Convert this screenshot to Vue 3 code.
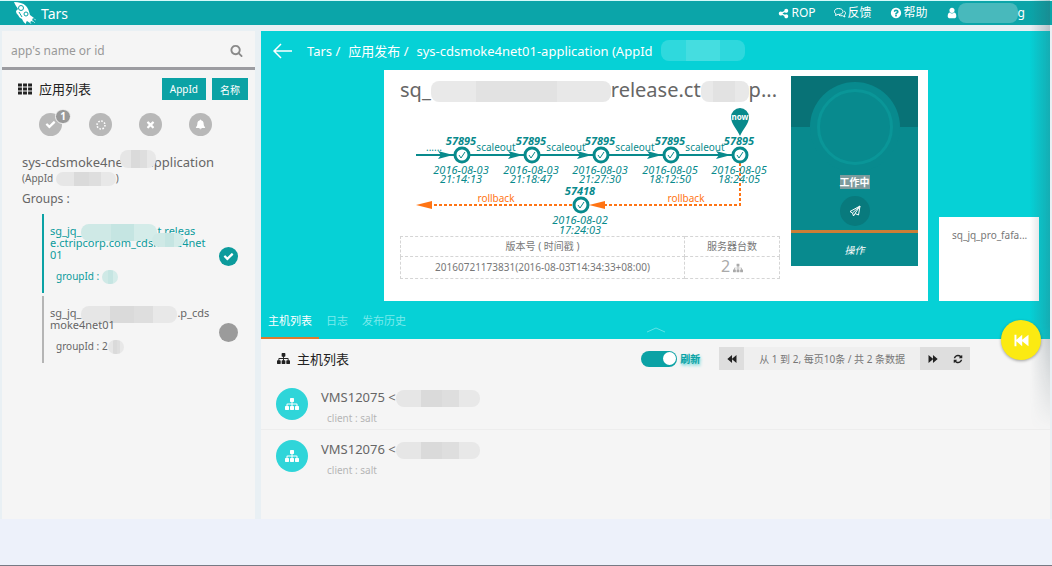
<script setup>
import { h, ref } from 'vue'

const paths = {
  check: 'M1671 566q0 40-28 68l-724 724-136 136q-28 28-68 28t-68-28l-136-136-362-362q-28-28-28-68t28-68l136-136q28-28 68-28t68 28l294 295 656-657q28-28 68-28t68 28l136 136q28 28 28 68z',
  times: 'M1490 1322q0 40-28 68l-136 136q-28 28-68 28t-68-28l-294-294-294 294q-28 28-68 28t-68-28l-136-136q-28-28-28-68t28-68l294-294-294-294q-28-28-28-68t28-68l136-136q28-28 68-28t68 28l294 294 294-294q28-28 68-28t68 28l136 136q28 28 28 68t-28 68l-294 294 294 294q28 28 28 68z',
  search: 'M1216 832q0-185-131.5-316.5t-316.5-131.5-316.5 131.5-131.5 316.5 131.5 316.5 316.5 131.5 316.5-131.5 131.5-316.5zm512 832q0 52-38 90t-90 38q-54 0-90-38l-343-342q-179 124-399 124-143 0-273.5-55.5t-225-150-150-225-55.5-273.5 55.5-273.5 150-225 225-150 273.5-55.5 273.5 55.5 225 150 150 225 55.5 273.5q0 220-124 399l343 343q37 37 37 90z',
  grid: 'M0 200h500v380H0zM646 200h500v380H646zM1292 200h500v380h-500zM0 706h500v380H0zM646 706h500v380H646zM1292 706h500v380h-500zM0 1212h500v380H0zM646 1212h500v380H646zM1292 1212h500v380h-500z',
  sitemap: 'M1792 1248v320q0 40-28 68t-68 28h-320q-40 0-68-28t-28-68v-320q0-40 28-68t68-28h96v-192h-512v192h96q40 0 68 28t28 68v320q0 40-28 68t-68 28h-320q-40 0-68-28t-28-68v-320q0-40 28-68t68-28h96v-192h-512v192h96q40 0 68 28t28 68v320q0 40-28 68t-68 28h-320q-40 0-68-28t-28-68v-320q0-40 28-68t68-28h96v-192q0-52 38-90t90-38h512v-192h-96q-40 0-68-28t-28-68v-320q0-40 28-68t68-28h320q40 0 68 28t28 68v320q0 40-28 68t-68 28h-96v192h512q52 0 90 38t38 90v192h96q40 0 68 28t28 68z',
  refresh: 'M1639 1056q0 5-1 7-64 268-268 434.5t-478 166.5q-146 0-282.5-55t-243.5-157l-129 129q-19 19-45 19t-45-19-19-45v-448q0-26 19-45t45-19h448q26 0 45 19t19 45-19 45l-137 137q71 66 161 102t187 36q134 0 250-65t186-179q11-17 53-117 8-23 30-23h192q13 0 22.5 9.5t9.5 22.5zm25-800v448q0 26-19 45t-45 19h-448q-26 0-45-19t-19-45 19-45l138-138q-148-137-349-137-134 0-250 65t-186 179q-11 17-53 117-8 23-30 23h-199q-13 0-22.5-9.5t-9.5-22.5v-7q65-268 270-434.5t480-166.5q146 0 284 55.5t245 156.5l130-129q19-19 45-19t45 19 19 45z',
  user: 'M1536 1399q0 109-62.5 187t-150.5 78h-854q-88 0-150.5-78t-62.5-187q0-85 8.5-160.5t31.5-152 58.5-131 94-89 134.5-34.5q131 128 313 128t313-128q76 0 134.5 34.5t94 89 58.5 131 31.5 152 8.5 160.5zm-256-887q0 159-112.5 271.5t-271.5 112.5-271.5-112.5-112.5-271.5 112.5-271.5 271.5-112.5 271.5 112.5 112.5 271.5z',
  question: 'M1024 1376v-192q0-14-9-23t-23-9h-192q-14 0-23 9t-9 23v192q0 14 9 23t23 9h192q14 0 23-9t9-23zm256-672q0-88-55.5-163t-138.5-116-170-41q-243 0-371 213-15 24 8 42l132 100q7 6 19 6 16 0 25-12 53-68 86-92 34-24 86-24 48 0 85.5 26t37.5 59q0 38-20 61t-68 45q-63 28-115.5 86.5t-52.5 125.5v36q0 14 9 23t23 9h192q14 0 23-9t9-23q0-19 21.5-49.5t54.5-49.5q32-18 49-28.5t46-35 44.5-48 28-60.5 12.5-81zm384 192q0 209-103 385.5t-279.5 279.5-385.5 103-385.5-103-279.5-279.5-103-385.5 103-385.5 279.5-279.5 385.5-103 385.5 103 279.5 279.5 103 385.5z',
  share: 'M1344 1024q133 0 226.500 93.500t93.500 226.500-93.500 226.500-226.500 93.500-226.500-93.500-93.500-226.500q0-12 2-34l-360-180q-92 86-218 86-133 0-226.500-93.500t-93.500-226.500 93.500-226.500 226.500-93.500q126 0 218 86l360-180q-2-22-2-34 0-133 93.500-226.500t226.500-93.500 226.500 93.500 93.500 226.500-93.500 226.500-226.500 93.500q-126 0-218-86l-360 180q2 22 2 34t-2 34l360 180q92-86 218-86z',
  bell: 'M896 100q90 0 100 110c240 50 400 240 410 500 10 360 80 480 250 640q0 100-110 100H246q-110 0-110-100c170-160 240-280 250-640 10-260 170-450 410-500q10-110 100-110zM690 1520h412q-30 170-206 170t-206-170z',
  backward: 'M1700 200v1392L900 946v646L60 896 900 200v646z',
  forward: 'M92 200v1392L892 946v646l840-696L892 200v646z',
  fastback: 'M60 200h230v620L980 200v620L1732 200v1392L980 972v620L290 972v620H60z'
}
const Icon = (p) => h('svg', { viewBox: '0 0 1792 1792', width: p.size, height: p.size, 'aria-hidden': 'true', fill: 'currentColor' }, [h('path', { d: paths[p.name] })])
Icon.props = ['name', 'size']

const query = ref('')
const autoRefresh = ref(true)
const nodes = [
  { x: 62, date: '2016-08-03', time: '21:14:13' },
  { x: 132, date: '2016-08-03', time: '21:18:47' },
  { x: 201, date: '2016-08-03', time: '21:27:30' },
  { x: 271, date: '2016-08-05', time: '18:12:50' },
  { x: 340, date: '2016-08-05', time: '18:24:05' }
]
const hosts = ['VMS12075', 'VMS12076']
const tabs = ['主机列表', '日志', '发布历史']
</script>

<template>
  <div class="page">
    <header class="top">
      <a class="brand" href="#">
        <svg class="rocket" viewBox="0 0 24 24" width="24" height="24" aria-hidden="true">
          <path d="M1 1c5 0 9 1 12 4 2 2 3 5 4 9l4 3-2 1 2 3-3-1-1 2-3-2c-1 1-1 2-1 3-2-1-3-3-4-5-2-1-3-2-4-4-1-1-2-2-2-4l2-2C4 6 2 4 1 1z" fill="#fff" />
          <circle cx="8" cy="7" r="2.500" fill="none" stroke="#0ba5a9" stroke-width="1" />
          <circle cx="13" cy="13" r="2" fill="none" stroke="#0ba5a9" stroke-width="1" />
          <path d="M6 11l3 5" stroke="#0ba5a9" fill="none" />
          <path d="M19 19l3 3M17 21l1 2M21 18l2 1" stroke="#8ad9db" fill="none" />
        </svg>
        <span>Tars</span>
      </a>
      <nav class="links">
        <a href="#"><Icon name="share" size="11" />ROP</a>
        <a href="#">
          <svg viewBox="0 0 24 24" width="12" height="12" fill="none" stroke="currentColor" stroke-width="2" aria-hidden="true">
            <path d="M9 3c-5 0-8 2.500-8 6 0 2 1 3.500 3 4.500L3 17l5-2.200c6 .4 10-2.300 10-5.800S14 3 9 3z" /><path d="M20 8c2 1 3 2.500 3 4.500s-1 3-2.500 4L22 20l-5-2.500c-3 .3-5 0-7-1" />
          </svg>反馈</a>
        <a href="#"><Icon name="question" size="12" />帮助</a>
        <a class="account" href="#"><Icon name="user" size="12" /><i class="smudge w60 teal"></i>g</a>
      </nav>
    </header>

    <div class="body">
      <aside class="side">
        <div class="search">
          <input v-model="query" type="text" placeholder="app's name or id" aria-label="app's name or id">
          <button type="button" aria-label="search"><Icon name="search" size="13" /></button>
        </div>
        <div class="side-head">
          <h2><Icon name="grid" size="14" />应用列表</h2>
          <button type="button">AppId</button>
          <button type="button">名称</button>
        </div>
        <div class="filters">
          <button type="button" aria-label="success"><Icon name="check" size="11" /><b>1</b></button>
          <button type="button" aria-label="running">
            <svg viewBox="0 0 12 12" width="12" height="12" aria-hidden="true"><circle cx="6" cy="6" r="4" fill="none" stroke="#fff" stroke-width="1.500" stroke-dasharray="1.600 1.500" /></svg>
          </button>
          <button type="button" aria-label="failed"><Icon name="times" size="11" /></button>
          <button type="button" aria-label="alerts"><Icon name="bell" size="11" /></button>
        </div>
        <div class="app">
          <p class="app-name">sys-cdsmoke4net01-application<i class="smudge over w36 name-mask"></i></p>
          <p class="app-id">(AppId <i class="smudge w60"></i>)</p>
          <p class="groups-label">Groups :</p>
          <div class="group on">
            <div class="group-text">
              <p>sg_jq_<i class="smudge w76 tall mint"></i>t.releas<br>e.ctripcorp.com_cdsmoke4net<br>01<i class="smudge over w32 mint group-mask"></i></p>
              <p class="gid">groupId : <i class="smudge w16 mint"></i></p>
            </div>
            <button type="button" aria-label="selected group"><Icon name="check" size="11" /></button>
          </div>
          <div class="group">
            <div class="group-text">
              <p>sg_jq_<i class="smudge w96 tall"></i>.p_cds<br>moke4net01</p>
              <p class="gid">groupId : 2<i class="smudge w16"></i></p>
            </div>
            <button type="button" aria-label="select group"></button>
          </div>
        </div>
      </aside>

      <main class="main">
        <section class="hero">
          <nav class="crumbs">
            <a href="#" aria-label="back"><svg viewBox="0 0 20 16" width="20" height="16" fill="none" stroke="currentColor" stroke-width="1.500" aria-hidden="true"><path d="M8 1L1 8l7 7M1 8h18" /></svg></a>
            <a href="#">Tars /</a><a href="#">应用发布 /</a><span>sys-cdsmoke4net01-application (AppId</span><i class="smudge w84 aqua"></i>
          </nav>
          <div class="stage">
            <article class="card">
              <div class="info">
                <h1>sq_<i class="smudge w180 big"></i>release.ct<i class="smudge w48 big"></i>p...</h1>
                <svg class="timeline" viewBox="0 0 380 132" width="380" height="132" role="img" aria-label="release timeline">
                  <g stroke="#088a8c" stroke-width="2"><path d="M16 51H54M70 51H124M140 51H193M209 51H263M279 51H332" /></g>
                  <g stroke="#ff7414" stroke-width="2" stroke-dasharray="3 2" fill="none"><path d="M340 59V101H204" /><path d="M172 101H32" /></g>
                  <path d="M16 101l16-4v8zM189 101l16-4v8z" fill="#ff7414" />
                  <path d="M340 32C337 25 331 20 331 13a9 9 0 0 1 18 0C349 20 343 25 340 32z" fill="#088a8c" />
                  <text class="now" x="340" y="16">now</text>
                  <text class="op" x="34" y="47">......</text>
                  <template v-for="(n, i) in nodes" :key="n.x">
                    <path :d="`M${n.x - 9} 51l-15-4 3 4-3 4z`" fill="#088a8c" />
                    <circle :cx="n.x" cy="51" r="7" class="ring" />
                    <path :d="`M${n.x - 3} 51l2 3 4-6`" class="tick" />
                    <text class="ver" :x="n.x - 1" y="41">57895</text>
                    <text class="when" :x="n.x - 1" y="70">{{ n.date }}</text>
                    <text class="when" :x="n.x - 1" y="79">{{ n.time }}</text>
                    <text v-if="i < 4" class="op" :x="n.x + 34" y="47">scaleout</text>
                  </template>
                  <circle cx="181" cy="101" r="7" class="ring" />
                  <path d="M178 101l2 3 4-6" class="tick" />
                  <text class="ver" x="180" y="91">57418</text>
                  <text class="when" x="180" y="120">2016-08-02</text>
                  <text class="when" x="180" y="130">17:24:03</text>
                  <text class="op back" x="96" y="98">rollback</text>
                  <text class="op back" x="286" y="98">rollback</text>
                </svg>
                <table>
                  <thead><tr><th>版本号 ( 时间戳 )</th><th>服务器台数</th></tr></thead>
                  <tbody><tr><td>20160721173831(2016-08-03T14:34:33+08:00)</td><td class="count"><span>2</span> <Icon name="sitemap" size="10" /></td></tr></tbody>
                </table>
              </div>
              <div class="status">
                <div class="dial"><span></span></div>
                <p><mark>工作中</mark></p>
                <button class="send" type="button" aria-label="publish">
                  <svg viewBox="0 0 24 24" width="12" height="12" fill="none" stroke="#fff" stroke-width="2" stroke-linejoin="round" aria-hidden="true"><path d="M22 2L2 13l5 3L22 2l-3 18-7-3-3 5-2-6M22 2l-10 15" /></svg>
                </button>
                <button class="act" type="button">操作</button>
              </div>
            </article>
            <article class="next">sq_jq_pro_fafa...</article>
          </div>
          <div class="tabs">
            <button v-for="(t, i) in tabs" :key="t" type="button" :class="{ active: i === 0 }">{{ t }}</button>
            <svg class="fold" viewBox="0 0 20 6" width="20" height="6" fill="none" stroke="#5fe3e6" aria-hidden="true"><path d="M1 5l9-4 9 4" /></svg>
          </div>
          <button class="fab" type="button" aria-label="rollback"><Icon name="fastback" size="15" /></button>
        </section>

        <section class="hosts">
          <div class="hosts-head">
            <h2><Icon name="sitemap" size="13" />主机列表</h2>
            <label class="switch"><input v-model="autoRefresh" type="checkbox"><span>刷新</span></label>
            <div class="pager">
              <button type="button" aria-label="previous"><Icon name="backward" size="10" /></button>
              <span>从 1 到 2, 每页10条 / 共 2 条数据</span>
              <button type="button" aria-label="next"><Icon name="forward" size="10" /></button>
              <button type="button" aria-label="reload"><Icon name="refresh" size="10" /></button>
            </div>
          </div>
          <ul>
            <li v-for="name in hosts" :key="name">
              <span class="avatar"><Icon name="sitemap" size="14" /></span>
              <div class="host-text">
                <p class="host">{{ name }} &lt;<i class="smudge w84 tall"></i></p>
                <p class="client">client : salt</p>
              </div>
            </li>
          </ul>
        </section>
      </main>
    </div>
    <div class="edge"></div>
  </div>
</template>

<style>
body { background: #edf1fa; }
</style>

<style scoped>
* { box-sizing: border-box; margin: 0; padding: 0; }
.page {
  position: relative; display: flex; flex-direction: column; min-height: 100vh; overflow: hidden;
  padding-bottom: 46px; border-bottom: 1px solid #777a84;
  font-family: "Noto Sans", "Noto Sans CJK SC", sans-serif; font-size: 12px; color: #666;
}
a { color: inherit; text-decoration: none; }
button { border: 0; font: inherit; color: inherit; background: none; display: flex; align-items: center; justify-content: center; }
svg { flex: none; }
h1, h2 { font-weight: 400; }

.top { display: flex; justify-content: space-between; height: 25px; border-top: 1px solid #d5fafa; background: #0ba5a9; color: #fff; }
.brand { display: flex; align-items: center; gap: 4px; padding-left: 13px; font-size: 14px; }
.links { display: flex; align-items: center; padding-right: 27px; gap: 18px; }
.links a { display: flex; align-items: center; gap: 2px; line-height: 16px; }
.links .account { gap: 0; }

.smudge { display: inline-block; vertical-align: middle; height: 14px; margin: -4px 0; border-radius: 8px; background: linear-gradient(90deg, #e6e6e6 30%, #dadada 30% 55%, #dedede 55% 75%, #e8e8e8 75%); }
.smudge.tall { height: 17px; }
.smudge.big { height: 21px; margin: -2px 0; background: linear-gradient(90deg, #e9e9e9 25%, #e2e2e2 25% 70%, #e8e8e8 70%); }
.smudge.mint { background: linear-gradient(90deg, #cfe9e6 40%, #c5e5e2 40% 70%, #d4ece9 70%); }
.smudge.teal { background: #48b9bc; height: 20px; }
.smudge.aqua { height: 21px; background: linear-gradient(90deg, #2fd9dd 30%, #45dde0 30% 70%, #2ed8dd 70%); }
.smudge.over { position: absolute; margin: 0; }
.w16 { width: 16px; } .w32 { width: 32px; } .w36 { width: 36px; } .w48 { width: 48px; } .w60 { width: 60px; } .w76 { width: 76px; } .w84 { width: 84px; } .w96 { width: 96px; } .w180 { width: 180px; }

.body { flex: 1; display: flex; gap: 6px; padding: 6px 2px 0; background: #e9f0f4; }
.side { flex: none; width: 253px; background: #f5f5f5; }
.search { display: flex; align-items: center; height: 39px; border-bottom: 3px solid #9c9ca1; padding: 2px 12px 0 9px; color: #8a8a8a; }
.search input { flex: 1; min-width: 0; border: 0; outline: 0; background: none; font: inherit; color: #777; }
.search input::placeholder { color: #999; opacity: 1; }
.side-head { display: flex; align-items: center; padding: 8px 7px 0 16px; gap: 6px; }
.side-head h2 { flex: 1; display: flex; align-items: center; gap: 7px; font-size: 13px; line-height: 22px; color: #222; }
.side-head button { height: 22px; padding: 0 8px; background: #0ba2a5; color: #fff; font-size: 10px; }
.filters { display: flex; gap: 27px; padding: 13px 0 0 37px; }
.filters button { position: relative; width: 23px; height: 23px; border-radius: 50%; background: #b8b8b8; color: #fff; }
.filters b { position: absolute; left: 16px; top: -4px; width: 16px; height: 15px; border: 1px solid #f5f5f5; border-radius: 8px; background: #999; font-size: 10px; line-height: 13px; text-align: center; }
.app { padding: 17px 17px 0 20px; }
.app-name { position: relative; font-size: 13px; line-height: 18px; }
.name-mask { left: 98px; top: -3px; height: 18px; }
.app-id { font-size: 10px; line-height: 14px; }
.groups-label { padding: 5px 0 7px; font-size: 12px; line-height: 17px; }
.group { display: flex; align-items: center; justify-content: space-between; margin: 3px 0 0 20px; padding: 11px 0 10px 6px; border-left: 2px solid #b5b5b5; font-size: 11px; line-height: 12px; }
.group-text { position: relative; white-space: nowrap; }
.group .gid { padding: 9px 0 0 6px; font-size: 10px; line-height: 13px; }
.group.on { margin-top: 0; border-color: #0ba2a5; color: #0c9b9c; }
.group-mask { left: 102px; top: 8px; }
.group button { width: 19px; height: 19px; margin-top: 4px; border-radius: 50%; background: #9b9b9b; }
.group.on button { background: #0c9b9c; color: #fff; }

.main { flex: 1; min-width: 0; background: #f5f5f5; }
.hero { position: relative; background: #06d1d6; color: #fff; }
.crumbs { display: flex; align-items: center; gap: 8px; height: 39px; padding-left: 12px; font-size: 13px; }
.crumbs a { display: flex; }
.crumbs a:first-child { margin-right: 6px; }
.stage { display: flex; align-items: flex-end; justify-content: flex-end; gap: 11px; padding-right: 11px; }
.card { display: flex; align-items: flex-start; justify-content: space-between; width: 544px; padding: 6px 10px 22px 16px; background: #fff; color: #666; }
.info { width: 380px; }
h1 { font-size: 20px; line-height: 28px; white-space: nowrap; }
.timeline { display: block; }
.timeline text { text-anchor: middle; font-size: 11px; fill: #088a8c; }
.timeline .ver { font-weight: 700; font-style: italic; }
.timeline .when { font-style: italic; }
.timeline .op { font-size: 10px; }
.timeline .back { fill: #ff7414; }
.timeline .now { fill: #fff; font-size: 8px; font-weight: 700; }
.timeline .ring { fill: #fff; stroke: #088a8c; stroke-width: 3; }
.timeline .tick { fill: none; stroke: #088a8c; stroke-width: 1; }
table { width: 100%; border-collapse: collapse; font-size: 10px; line-height: 19px; color: #777; }
th, td { height: 20px; border: 1px dashed #d5d5d5; font-weight: 400; text-align: center; }
th:last-child { width: 95px; }
.count { color: #aaa; }
.count span { font-size: 16px; }
.count svg { vertical-align: -1px; }

.status { display: flex; flex-direction: column; align-items: center; width: 127px; background: linear-gradient(#087276 51px, #088a8e 51px); color: #fff; }
.dial { width: 90px; height: 90px; margin-top: 6px; padding: 7px; border-radius: 50%; background: #088a8e; }
.dial span { display: block; height: 76px; border: 3px solid #0a9698; border-radius: 50%; }
.status p { padding: 3px 0 7px; font-size: 10px; line-height: 14px; }
.status mark { background: #7d9b9d; color: #fff; font-weight: 700; }
.send { width: 30px; height: 30px; border-radius: 50%; background: #087a7d; }
.act { align-self: stretch; height: 36px; margin-top: 4px; border-top: 3px solid #cc7e36; font-size: 10px; font-style: italic; }
.next { width: 100px; height: 84px; padding: 10px 0 0 13px; background: #fff; color: #777; font-size: 10px; line-height: 16px; }
.tabs { position: relative; display: flex; height: 38px; }
.tabs button { padding: 2px 7px 0; border-bottom: 2px solid transparent; color: #7ceaec; font-size: 11px; }
.tabs button.active { border-color: #dd7b2e; color: #fff; }
.fold { position: absolute; left: 50%; bottom: 6px; transform: translateX(-10px); }
.fab { position: absolute; right: 9px; bottom: -21px; width: 40px; height: 40px; border-radius: 50%; background: #fbea12; color: #fff; box-shadow: 0 1px 3px rgba(0, 0, 0, .35); z-index: 2; }

.hosts-head { display: flex; align-items: center; height: 39px; padding: 0 80px 0 16px; }
.hosts-head h2 { flex: 1; display: flex; align-items: center; gap: 7px; font-size: 13px; color: #222; }
.switch { display: flex; align-items: center; gap: 3px; margin-right: 19px; font-size: 10px; font-weight: 700; color: #0ba2a5; text-shadow: 1px 2px 3px #5fd3d5; }
.switch input { appearance: none; display: flex; justify-content: flex-end; align-items: center; width: 36px; height: 16px; padding: 1px; border-radius: 8px; background: #0ba2a5; }
.switch input::before { content: ""; width: 13px; height: 13px; border-radius: 50%; background: #fff; }
.switch input:not(:checked) { justify-content: flex-start; background: #aaa; }
.pager { display: flex; align-items: center; height: 23px; background: #efefef; font-size: 10px; color: #777; }
.pager span { padding: 0 15px; }
.pager button { width: 25px; height: 23px; background: #dedede; color: #222; }
ul { list-style: none; }
li { display: flex; align-items: center; gap: 13px; height: 52px; padding-left: 15px; border-bottom: 1px solid #ededed; }
li:last-child { border-color: transparent; }
.avatar { display: flex; align-items: center; justify-content: center; width: 32px; height: 32px; border-radius: 50%; background: #2fd5d9; color: #fff; }
.host-text { padding-top: 6px; }
.host { font-size: 13px; line-height: 20px; }
.client { padding: 3px 0 0 6px; font-size: 10px; line-height: 17px; color: #b5b5b5; }
.edge { position: absolute; right: 2px; top: 0; width: 20px; height: 430px; pointer-events: none; background: linear-gradient(90deg, transparent, rgba(60, 80, 90, .28)); mask-image: linear-gradient(#000 75%, transparent); }
</style>
